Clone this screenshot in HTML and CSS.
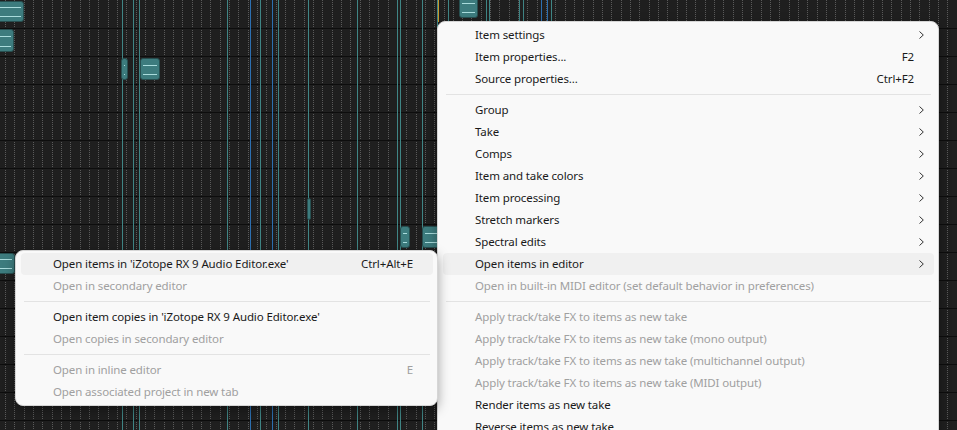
FILE: index.html
```html
<!DOCTYPE html>
<html lang="en">
<head>
    <meta charset="UTF-8">
    <title>Item context menu</title>
    <link rel="stylesheet" href="styles.css">
</head>
<body>
    <div class="arrange" id="arrange">
        <div class="edit-cursor"></div>
    </div>

    <div class="menu main-menu">
        <div class="item"><span class="label">Item settings</span><span class="arrow"><svg width="5" height="8" viewBox="0 0 5 8"><path d="M0.5 0.5 L4.3 4 L0.5 7.5"/></svg></span></div>
        <div class="item"><span class="label">Item properties...</span><span class="key">F2</span><span class="arrow"></span></div>
        <div class="item"><span class="label">Source properties...</span><span class="key">Ctrl+F2</span><span class="arrow"></span></div>
        <div class="sep"></div>
        <div class="item"><span class="label">Group</span><span class="arrow"><svg width="5" height="8" viewBox="0 0 5 8"><path d="M0.5 0.5 L4.3 4 L0.5 7.5"/></svg></span></div>
        <div class="item"><span class="label">Take</span><span class="arrow"><svg width="5" height="8" viewBox="0 0 5 8"><path d="M0.5 0.5 L4.3 4 L0.5 7.5"/></svg></span></div>
        <div class="item"><span class="label">Comps</span><span class="arrow"><svg width="5" height="8" viewBox="0 0 5 8"><path d="M0.5 0.5 L4.3 4 L0.5 7.5"/></svg></span></div>
        <div class="item"><span class="label">Item and take colors</span><span class="arrow"><svg width="5" height="8" viewBox="0 0 5 8"><path d="M0.5 0.5 L4.3 4 L0.5 7.5"/></svg></span></div>
        <div class="item"><span class="label">Item processing</span><span class="arrow"><svg width="5" height="8" viewBox="0 0 5 8"><path d="M0.5 0.5 L4.3 4 L0.5 7.5"/></svg></span></div>
        <div class="item"><span class="label">Stretch markers</span><span class="arrow"><svg width="5" height="8" viewBox="0 0 5 8"><path d="M0.5 0.5 L4.3 4 L0.5 7.5"/></svg></span></div>
        <div class="item"><span class="label">Spectral edits</span><span class="arrow"><svg width="5" height="8" viewBox="0 0 5 8"><path d="M0.5 0.5 L4.3 4 L0.5 7.5"/></svg></span></div>
        <div class="item active"><span class="label">Open items in editor</span><span class="arrow"><svg width="5" height="8" viewBox="0 0 5 8"><path d="M0.5 0.5 L4.3 4 L0.5 7.5"/></svg></span></div>
        <div class="item disabled"><span class="label">Open in built-in MIDI editor (set default behavior in preferences)</span><span class="arrow"></span></div>
        <div class="sep"></div>
        <div class="item disabled"><span class="label">Apply track/take FX to items as new take</span><span class="arrow"></span></div>
        <div class="item disabled"><span class="label">Apply track/take FX to items as new take (mono output)</span><span class="arrow"></span></div>
        <div class="item disabled"><span class="label">Apply track/take FX to items as new take (multichannel output)</span><span class="arrow"></span></div>
        <div class="item disabled"><span class="label">Apply track/take FX to items as new take (MIDI output)</span><span class="arrow"></span></div>
        <div class="item"><span class="label">Render items as new take</span><span class="arrow"></span></div>
        <div class="item"><span class="label">Reverse items as new take</span><span class="arrow"></span></div>
    </div>

    <div class="menu sub-menu">
        <div class="item active"><span class="label">Open items in 'iZotope RX 9 Audio Editor.exe'</span><span class="key">Ctrl+Alt+E</span><span class="arrow"></span></div>
        <div class="item disabled"><span class="label">Open in secondary editor</span><span class="arrow"></span></div>
        <div class="sep"></div>
        <div class="item"><span class="label">Open item copies in 'iZotope RX 9 Audio Editor.exe'</span><span class="arrow"></span></div>
        <div class="item disabled"><span class="label">Open copies in secondary editor</span><span class="arrow"></span></div>
        <div class="sep"></div>
        <div class="item disabled"><span class="label">Open in inline editor</span><span class="key">E</span><span class="arrow"></span></div>
        <div class="item disabled"><span class="label">Open associated project in new tab</span><span class="arrow"></span></div>
    </div>

    <script>
        const arrange = document.getElementById('arrange');

        // x positions of take/item edge lines in the arrange view
        const tealLines = [122, 133, 139, 227, 260, 278, 308, 357, 397, 400, 422, 437, 448, 486, 489, 519, 523, 551];
        const blueLines = [250, 272, 541, 547];

        tealLines.forEach(x => {
            const line = document.createElement('div');
            line.className = 'vline';
            line.style.left = x + 'px';
            arrange.appendChild(line);
        });
        blueLines.forEach(x => {
            const line = document.createElement('div');
            line.className = 'vline blue';
            line.style.left = x + 'px';
            arrange.appendChild(line);
        });

        // media items: [left, top, width, height]
        const items = [
            [-3, 1, 27, 21],
            [-3, 29, 17, 23],
            [121, 58, 7, 22],
            [140, 58, 20, 22],
            [307, 198, 4, 22],
            [400, 226, 10, 22],
            [422, 226, 20, 22],
            [-3, 253, 18, 21],
            [459, -3, 19, 21]
        ];
        items.forEach(([x, y, w, h]) => {
            const item = document.createElement('div');
            item.className = 'media-item';
            item.style.left = x + 'px';
            item.style.top = y + 'px';
            item.style.width = w + 'px';
            item.style.height = h + 'px';
            arrange.appendChild(item);
        });
    </script>
</body>
</html>
```

FILE: styles.css
```css
html, body {
    margin: 0;
    padding: 0;
    width: 957px;
    height: 430px;
    overflow: hidden;
}
body {
    font-family: "Segoe UI", "Noto Sans", sans-serif;
    font-size: 11.5px;
    letter-spacing: -0.12px;
    background-color: #1e1e1e;
}
.arrange {
    position: relative;
    width: 957px;
    height: 430px;
    background-color: #1f1f1f;
    background-image:
        repeating-linear-gradient(to bottom, transparent 0 27px, #0d0d0d 27px 28px),
        repeating-linear-gradient(to bottom, transparent 0 1px, #1f1f1f 1px 2px),
        repeating-linear-gradient(to right, transparent 0 5px, #5a5a5a 5px 6px, transparent 6px 9.33px);
    background-position: 0 1px, 0 0, 0 0;
}
.vline {
    position: absolute;
    top: 0;
    bottom: 0;
    width: 1px;
    background-color: #3f8585;
}
.vline.blue {
    background-color: #2c6fb0;
}
.media-item {
    position: absolute;
    box-sizing: border-box;
    background-color: #3d7c7e;
    border: 1px solid #274f50;
    border-radius: 3px;
}
.media-item::before,
.media-item::after {
    content: "";
    position: absolute;
    left: 2px;
    right: 2px;
    height: 1px;
    background-color: #a9dcdc;
}
.media-item::before {
    top: 28%;
}
.media-item::after {
    top: 74%;
}
.edit-cursor {
    position: absolute;
    left: 438px;
    top: 0;
    width: 1px;
    height: 22px;
    background-color: #c69a2c;
}

/* context menus */
.menu {
    position: absolute;
    box-sizing: border-box;
    background-color: #f9f9f9;
    border: 1px solid #d6d6d6;
    border-radius: 8px;
    padding: 2px 4px 2px 5px;
    box-shadow: 0 4px 12px rgba(0, 0, 0, 0.35);
    color: #1a1a1a;
}
.main-menu {
    left: 437px;
    top: 21px;
    width: 502px;
}
.sub-menu {
    left: 15px;
    top: 250px;
    width: 423px;
    z-index: 2;
}
.item {
    display: flex;
    align-items: center;
    box-sizing: border-box;
    height: 22px;
    padding-left: 32px;
    padding-bottom: 1px;
    border-radius: 4px;
    white-space: nowrap;
}
.item.active {
    background-color: #f0f0f0;
}
.item.disabled {
    color: #a0a0a0;
}
.label {
    flex: 1;
}
.key {
    text-align: right;
}
.arrow {
    width: 20px;
    box-sizing: border-box;
    padding-left: 5px;
    padding-top: 1px;
    display: flex;
    align-items: center;
}
.arrow path {
    fill: none;
    stroke: #333333;
    stroke-width: 1;
}
.sep {
    height: 1px;
    margin: 4px 3px;
    background-color: #e3e3e3;
}
```
